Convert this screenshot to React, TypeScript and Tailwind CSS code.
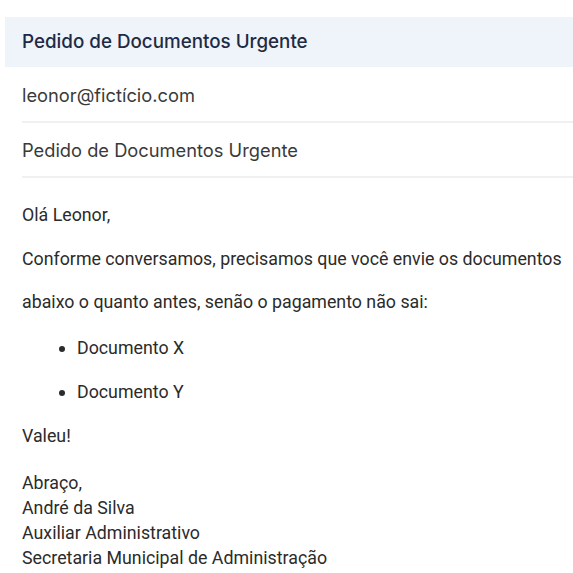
export default function App() {
  return (
    <div className="w-[573px] h-[573px] bg-white overflow-hidden pt-[17px] pl-[5px]">
      <div className="h-[50px] bg-[#eff3fa] flex items-center pl-[17px]">
        <h1 className="text-[18.8px] font-medium text-[#1f2a44] font-['Inter',sans-serif]">
          Pedido de Documentos Urgente
        </h1>
      </div>
      <div className="pl-[17px] font-['Inter',sans-serif] text-[18.3px] text-[#3a3a3a]">
        <div className="h-[56px] pt-[3px] flex items-center border-b-2 border-[#f0f0f0]">
          leonor@fictício.com
        </div>
        <div className="h-[55px] pt-[3px] flex items-center border-b-2 border-[#f0f0f0]">
          Pedido de Documentos Urgente
        </div>
      </div>
      <div className="pl-[17px] pt-[25px] font-['Roboto',sans-serif] text-[17.8px] leading-[24px] text-[#2b2b2b]">
        <p className="h-[44px]">Olá Leonor,</p>
        <p className="h-[43px]">Conforme conversamos, precisamos que você envie os documentos</p>
        <p className="h-[46px]">abaixo o quanto antes, senão o pagamento não sai:</p>
        <ul className="list-disc pl-[55px]">
          <li className="h-[44px]">Documento X</li>
          <li className="h-[44px]">Documento Y</li>
        </ul>
        <p className="h-[46px]">Valeu!</p>
        <div className="leading-[25px]">
          <p>Abraço,</p>
          <p>André da Silva</p>
          <p>Auxiliar Administrativo</p>
          <p>Secretaria Municipal de Administração</p>
        </div>
      </div>
    </div>
  );
}
